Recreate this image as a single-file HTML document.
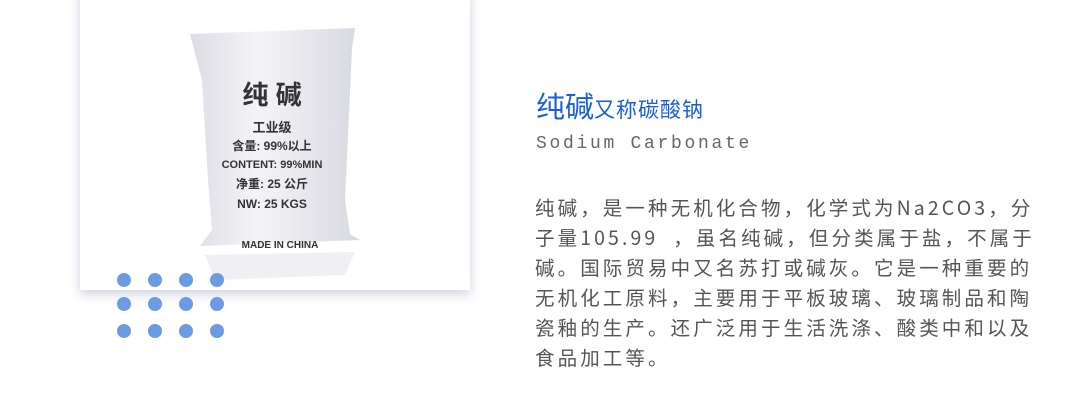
<!DOCTYPE html>
<html><head><meta charset="utf-8"><style>
html,body{margin:0;padding:0;background:#fff;width:1080px;height:400px;overflow:hidden;position:relative}
.card{position:absolute;left:80px;top:-10px;width:390px;height:300px;background:#fff;box-shadow:0 4px 10px rgba(120,120,170,.35)}
.dot{position:absolute;width:14px;height:14px;border-radius:50%;background:#6a9be3}
.t1{position:absolute;left:536px;top:84px;color:#1a5fd6;font-family:"Liberation Sans","Noto Sans CJK SC",sans-serif;white-space:nowrap}
.t1 b{font-weight:normal;font-size:29px}
.t1 span{font-size:21px;letter-spacing:1px}
.t2{position:absolute;left:536px;top:134px;font-family:"Liberation Mono",monospace;font-size:18px;color:#666;letter-spacing:2.7px}
.body{position:absolute;left:535px;top:192px;width:560px;font-family:"Noto Sans CJK SC",sans-serif;font-size:19.5px;line-height:30px;color:#555;white-space:nowrap;letter-spacing:3.1px}
</style></head><body>
<div class="card">
<svg width="390" height="300" style="position:absolute;left:0;top:10px">
<defs><linearGradient id="g" x1="0" x2="1"><stop offset="0" stop-color="#dcdce4"/><stop offset=".4" stop-color="#f4f4f8"/><stop offset="1" stop-color="#d8d8e0"/></linearGradient></defs>
<path d="M110 34 L275 28 L272 48 L265 200 L270 234 L280 240 L120 246 L132 230 L128 180 L122 80 Z" fill="url(#g)"/>
<path d="M125 255 L275 252 L265 275 L135 280 Z" fill="#f0f0f4"/>
<g font-family="Liberation Sans,'Noto Sans CJK SC',sans-serif" fill="#333" font-weight="bold" text-anchor="middle">
<text x="192" y="104" font-size="26">纯 碱</text>
<text x="192" y="132" font-size="13">工业级</text>
<text x="192" y="150" font-size="12">含量: 99%以上</text>
<text x="192" y="168" font-size="11">CONTENT: 99%MIN</text>
<text x="192" y="188" font-size="12">净重: 25 公斤</text>
<text x="192" y="208" font-size="12">NW: 25 KGS</text>
<text x="200" y="248" font-size="10">MADE IN CHINA</text>
</g>
</svg>
</div>
<div class="dot" style="left:117px;top:273px"></div><div class="dot" style="left:148px;top:273px"></div><div class="dot" style="left:179px;top:273px"></div><div class="dot" style="left:210px;top:273px"></div>
<div class="dot" style="left:117px;top:297px"></div><div class="dot" style="left:148px;top:297px"></div><div class="dot" style="left:179px;top:297px"></div><div class="dot" style="left:210px;top:297px"></div>
<div class="dot" style="left:117px;top:324px"></div><div class="dot" style="left:148px;top:324px"></div><div class="dot" style="left:179px;top:324px"></div><div class="dot" style="left:210px;top:324px"></div>
<div class="t1"><b>纯碱</b><span>又称碳酸钠</span></div>
<div class="t2">Sodium Carbonate</div>
<div class="body">纯碱，是一种无机化合物，化学式为Na2CO3，分<br>子量105.99&nbsp;&nbsp;，虽名纯碱，但分类属于盐，不属于<br>碱。国际贸易中又名苏打或碱灰。它是一种重要的<br>无机化工原料，主要用于平板玻璃、玻璃制品和陶<br>瓷釉的生产。还广泛用于生活洗涤、酸类中和以及<br>食品加工等。</div>
</body></html>
